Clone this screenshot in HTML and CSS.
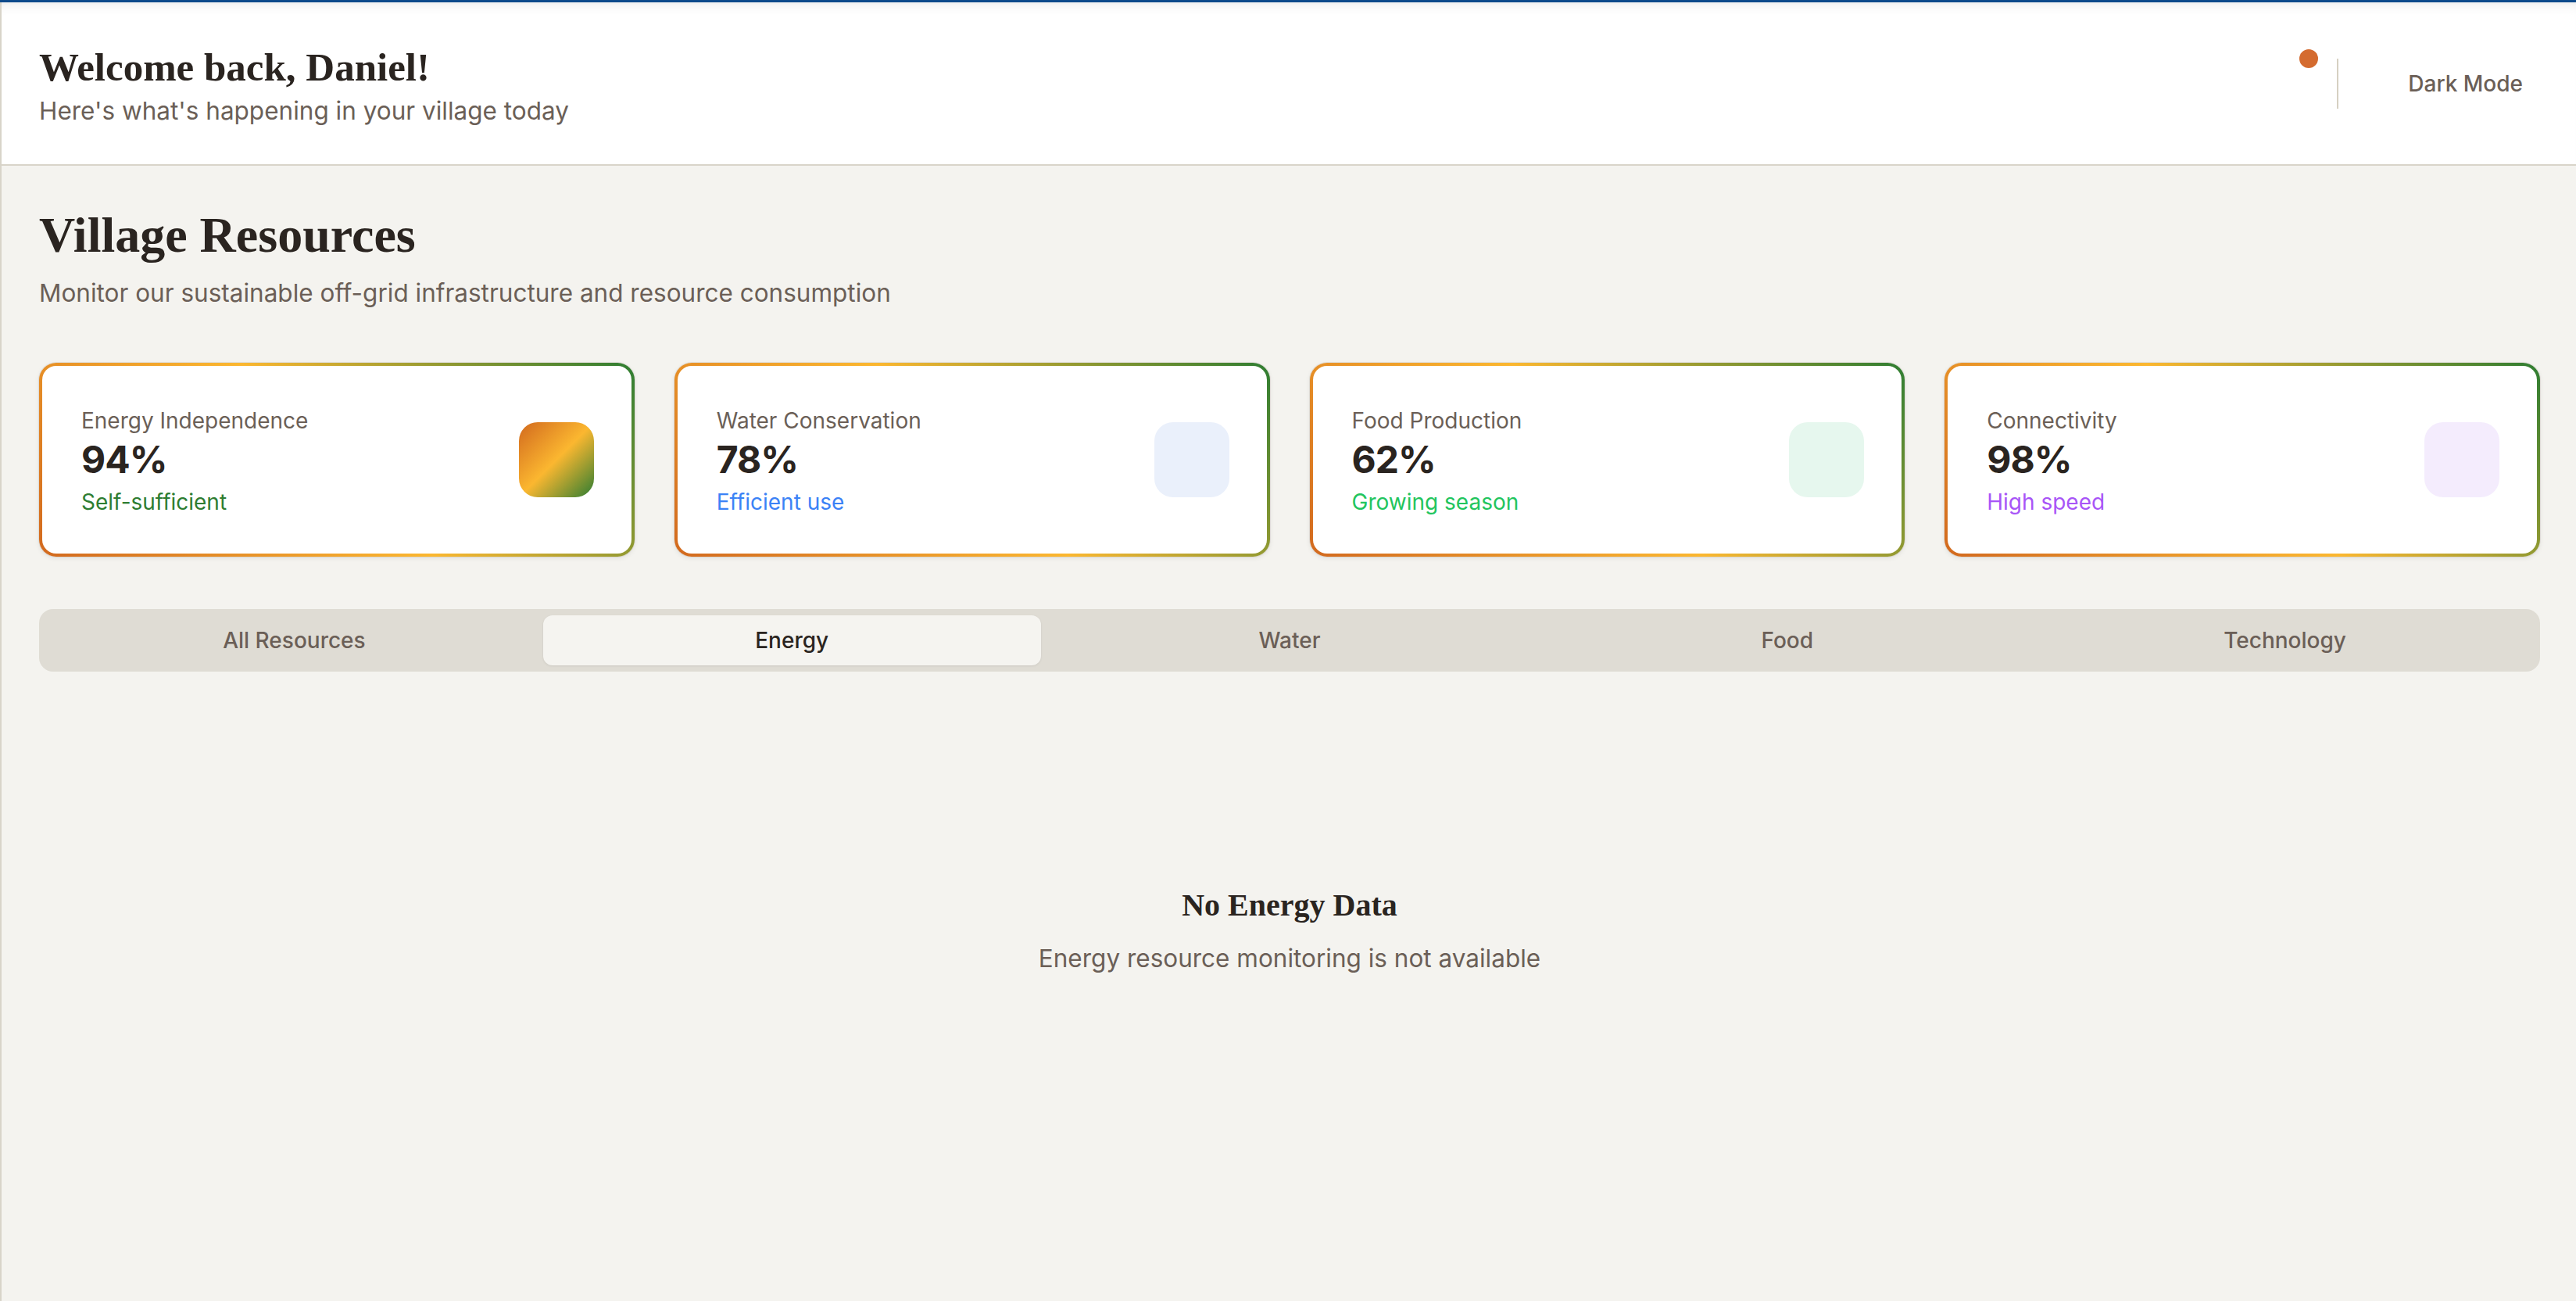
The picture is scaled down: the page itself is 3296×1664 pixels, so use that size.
FILE: index.html
```html
<!DOCTYPE html>
<html lang="en">
<head>
<meta charset="utf-8">
<title>Village Resources</title>
<link rel="stylesheet" href="styles.css">
</head>
<body>
<div class="topbar"></div>
<div class="main">
  <header class="header">
    <div class="greeting">
      <h1 class="greeting-title">Welcome back, Daniel!</h1>
      <p class="greeting-sub">Here's what's happening in your village today</p>
    </div>
    <div class="header-actions">
      <button class="bell" aria-label="Notifications"><span class="badge"></span></button>
      <span class="divider"></span>
      <button class="mode-btn">Dark Mode</button>
    </div>
  </header>

  <section class="content">
    <h2 class="page-title">Village Resources</h2>
    <p class="page-sub">Monitor our sustainable off-grid infrastructure and resource consumption</p>

    <div class="stats">
      <div class="card">
        <div class="card-text">
          <div class="card-label">Energy Independence</div>
          <div class="card-value">94%</div>
          <div class="card-note note-green">Self-sufficient</div>
        </div>
        <div class="card-icon icon-energy"></div>
      </div>
      <div class="card">
        <div class="card-text">
          <div class="card-label">Water Conservation</div>
          <div class="card-value">78%</div>
          <div class="card-note note-blue">Efficient use</div>
        </div>
        <div class="card-icon icon-water"></div>
      </div>
      <div class="card">
        <div class="card-text">
          <div class="card-label">Food Production</div>
          <div class="card-value">62%</div>
          <div class="card-note note-lime">Growing season</div>
        </div>
        <div class="card-icon icon-food"></div>
      </div>
      <div class="card">
        <div class="card-text">
          <div class="card-label">Connectivity</div>
          <div class="card-value">98%</div>
          <div class="card-note note-purple">High speed</div>
        </div>
        <div class="card-icon icon-tech"></div>
      </div>
    </div>

    <nav class="tabs">
      <button class="tab">All Resources</button>
      <button class="tab tab-active">Energy</button>
      <button class="tab">Water</button>
      <button class="tab">Food</button>
      <button class="tab">Technology</button>
    </nav>

    <div class="empty">
      <h3 class="empty-title">No Energy Data</h3>
      <p class="empty-sub">Energy resource monitoring is not available</p>
    </div>
  </section>
</div>
</body>
</html>
```

FILE: styles.css
```css
* { box-sizing: border-box; }

html, body {
  margin: 0;
  padding: 0;
  background: #f4f3ef;
  font-family: Inter, "Noto Sans", sans-serif;
  color: #2a2420;
}

.topbar {
  height: 3px;
  background: #0d4a8b;
  position: relative;
  z-index: 2;
}

.main {
  border-left: 2px solid #d8d4c9;
  min-height: calc(100vh - 3px);
}

.header {
  background: #ffffff;
  border-bottom: 2px solid #d8d4c9;
  height: 209px;
  padding: 0 48px;
  display: flex;
  align-items: center;
  justify-content: space-between;
  box-shadow: inset 0 14px 16px -12px rgba(0, 0, 0, 0.09);
}

.greeting {
  margin-top: 8px;
}

.greeting-title {
  margin: 0;
  font-family: "Liberation Serif", "Times New Roman", serif;
  font-weight: 700;
  font-size: 51px;
  line-height: 60px;
  color: #2a2420;
}

.greeting-sub {
  margin: 3px 0 0;
  font-size: 31.5px;
  line-height: 46px;
  color: #6b5f57;
}

.header-actions {
  display: flex;
  align-items: center;
}

.bell {
  position: relative;
  width: 48px;
  height: 48px;
  border: 0;
  background: transparent;
  padding: 0;
}

.badge {
  position: absolute;
  top: -20px;
  right: 1px;
  width: 24px;
  height: 24px;
  border-radius: 50%;
  background: #d46b2f;
}

.divider {
  width: 2px;
  height: 64px;
  background: #d6d0c2;
  margin-left: 23px;
}

.mode-btn {
  margin-left: 69px;
  border: 0;
  background: transparent;
  padding: 10px 20px;
  font-family: Inter, sans-serif;
  font-size: 28px;
  font-weight: 500;
  color: #6b5f57;
}

.content {
  padding: 50px 46px 48px 48px;
}

.page-title {
  margin: 0;
  font-family: "Liberation Serif", "Times New Roman", serif;
  font-weight: 700;
  font-size: 64px;
  line-height: 77px;
  color: #2a2420;
}

.page-sub {
  margin: 12px 0 0;
  font-size: 31.5px;
  line-height: 48px;
  color: #6b5f57;
}

.stats {
  margin-top: 65px;
  display: grid;
  grid-template-columns: repeat(4, 1fr);
  gap: 51px;
}

.card {
  height: 248px;
  border: 4px solid transparent;
  border-radius: 22px;
  background:
    linear-gradient(#ffffff, #ffffff) padding-box,
    linear-gradient(45deg, #d2691e 0%, #fbb730 50%, #2e7d32 100%) border-box;
  box-shadow: 0 0 0 1px rgba(120, 110, 90, 0.12), 0 2px 6px rgba(0, 0, 0, 0.08);
  padding: 4px 48px 0 50px;
  display: flex;
  align-items: center;
  justify-content: space-between;
}

.card-label {
  font-size: 28px;
  line-height: 40px;
  color: #6b5f57;
}

.card-value {
  font-size: 48px;
  font-weight: 700;
  letter-spacing: -0.02em;
  line-height: 60px;
  color: #2a2420;
  margin-top: 0;
}

.card-note {
  font-size: 28px;
  line-height: 40px;
  margin-top: 4px;
}

.note-green { color: #2e7d32; }
.note-blue { color: #3b82f6; }
.note-lime { color: #22c55e; }
.note-purple { color: #a855f7; }

.card-icon {
  width: 96px;
  height: 96px;
  border-radius: 24px;
  flex: none;
  margin-top: -4px;
}

.icon-energy { background: linear-gradient(135deg, #d2691e 0%, #fbb730 50%, #2e7d32 100%); }
.icon-water { background: #eaf0fb; }
.icon-food { background: #e6f7ee; }
.icon-tech { background: #f4ecfd; }

.tabs {
  margin-top: 67px;
  background: #dfdcd4;
  border-radius: 18px;
  padding: 8px;
  display: grid;
  grid-template-columns: repeat(5, 1fr);
}

.tab {
  height: 64px;
  border: 0;
  border-radius: 12px;
  background: transparent;
  font-family: Inter, sans-serif;
  font-size: 28px;
  font-weight: 500;
  color: #6b5f57;
}

.tab-active {
  background: #f5f4f0;
  color: #2a2420;
  box-shadow: 0 1px 3px rgba(0, 0, 0, 0.08);
}

.empty {
  padding-top: 275px;
  text-align: center;
}

.empty-title {
  margin: 0;
  font-family: "Liberation Serif", "Times New Roman", serif;
  font-weight: 700;
  font-size: 40px;
  line-height: 48px;
  color: #2a2420;
}

.empty-sub {
  margin: 20px 0 0;
  font-size: 31.5px;
  line-height: 48px;
  color: #6b5f57;
}
```
